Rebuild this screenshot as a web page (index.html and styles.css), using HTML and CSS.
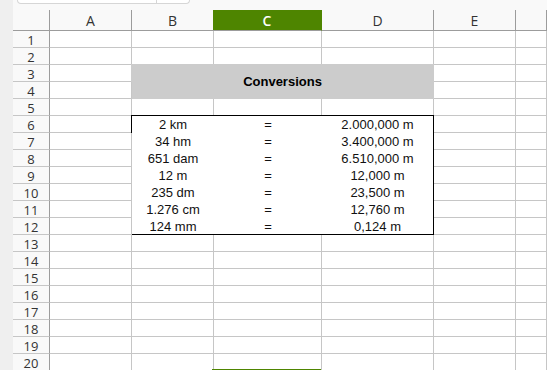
FILE: index.html
```html
<!DOCTYPE html>
<html lang="en">
<head>
    <meta charset="UTF-8" />
    <title>Conversions</title>
    <link rel="stylesheet" href="styles.css">
</head>
<body>
<div class="gutter"></div>
<div class="sheet">
    <div class="toolbar">
        <div class="namebox">
            <div class="namebox-field"></div>
        </div>
    </div>
    <div id="grid" class="grid">
        <!-- cells are inserted here -->
    </div>
</div>
<script>
    const columns = ['A', 'B', 'C', 'D', 'E', ''];
    const rows = [
        ['2 km', '2.000,000 m'],
        ['34 hm', '3.400,000 m'],
        ['651 dam', '6.510,000 m'],
        ['12 m', '12,000 m'],
        ['235 dm', '23,500 m'],
        ['1.276 cm', '12,760 m'],
        ['124 mm', '0,124 m']
    ];
    const grid = document.getElementById('grid');

    function add(cls, text) {
        const div = document.createElement('div');
        div.className = cls;
        if (text !== undefined) div.textContent = text;
        grid.appendChild(div);
        return div;
    }

    function buildTable() {
        const table = add('conv-table');
        rows.forEach(r => {
            table.insertAdjacentHTML('beforeend',
                `<span>${r[0]}</span><span>=</span><span>${r[1]}</span>`);
        });
    }

    // column headers
    add('corner');
    columns.forEach(c => add(c === 'C' ? 'colhead active' : 'colhead', c));

    for (let r = 1; r <= 21; r++) {
        add('rowhead', r);
        columns.forEach((c, i) => {
            // B3:D4 and B6:D12 are merged blocks
            const merged = i >= 1 && i <= 3 && ((r >= 3 && r <= 4) || (r >= 6 && r <= 12));
            if (merged) {
                if (r === 3 && i === 1) add('title', 'Conversions');
                if (r === 6 && i === 1) buildTable();
                return;
            }
            add(r === 21 && c === 'C' ? 'cell cursor' : 'cell');
        });
    }
</script>
</body>
</html>
```

FILE: styles.css
```css
body {
    margin: 0;
    width: 547px;
    height: 370px;
    overflow: hidden;
    display: flex;
    background: #fff;
    font-family: 'Liberation Sans', Arial, sans-serif;
}
.gutter {
    width: 13px;
    flex: none;
    background: #efefef;
}
.sheet {
    flex: 1;
    min-width: 0;
    display: flex;
    flex-direction: column;
}
.toolbar {
    height: 10px;
    flex: none;
    background: #f9f9f9;
}
.namebox {
    margin-left: 4px;
    width: 173px;
    height: 4px;
    box-sizing: border-box;
    border: 1px solid #d6d6d6;
    border-top: none;
    border-radius: 0 0 5px 5px;
    background: #fff;
}
.namebox-field {
    width: 138px;
    height: 100%;
    border-right: 1px solid #d6d6d6;
}
.grid {
    display: grid;
    grid-template-columns: 37px 82px 82px 108px 112px 82px 1fr;
    grid-template-rows: 21px;
    grid-auto-rows: 17px;
}
.grid > div {
    box-sizing: border-box;
}
.corner, .colhead, .rowhead {
    background: #f9f9f9;
    color: #333;
    font-family: 'Open Sans', sans-serif;
    font-size: 13px;
    display: flex;
    align-items: center;
    justify-content: center;
}
.colhead {
    font-size: 14px;
}
.corner, .colhead {
    border-right: 1px solid #9c9c9c;
    border-bottom: 1px solid #9c9c9c;
}
.colhead.active {
    margin-left: -1px;
    background: #4e8500;
    border-right-color: #4e8500;
    color: #fff;
    font-weight: 600;
}
.rowhead {
    border-right: 1px solid #9c9c9c;
    border-bottom: 1px solid #c6c6c6;
    padding-top: 1px;
}
.cell {
    border-right: 1px solid #c6c6c6;
    border-bottom: 1px solid #c6c6c6;
}
.cursor {
    position: relative;
}
.cursor::after {
    content: '';
    position: absolute;
    top: -2px;
    left: -2px;
    right: 0;
    height: 10px;
    border: 2px solid #4e8500;
}
.title {
    grid-column: span 3;
    grid-row: span 2;
    margin: -1px 0 0 -1px;
    background: #cccccc;
    color: #000;
    font-size: 13px;
    font-weight: 700;
    display: flex;
    align-items: center;
    justify-content: center;
}
.conv-table {
    grid-column: span 3;
    grid-row: span 7;
    margin: -1px 0 0 -1px;
    border: 1px solid #000;
    background: #fff;
    display: grid;
    grid-template-columns: 82px 108px 1fr;
    grid-auto-rows: 17px;
    overflow: hidden;
    color: #111;
    font-size: 13px;
}
.conv-table span {
    text-align: center;
    line-height: 17px;
}
```
